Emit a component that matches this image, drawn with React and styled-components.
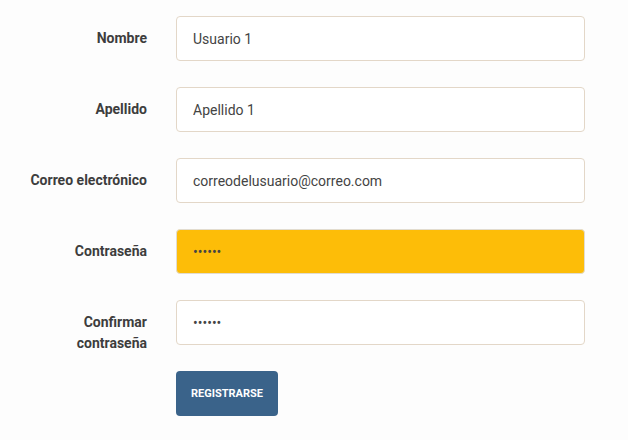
import React from 'react';
import styled, { createGlobalStyle } from 'styled-components';

const GlobalStyle = createGlobalStyle`
  body {
    margin: 0;
    background-color: #fdfdfd;
    font-family: Roboto, 'Liberation Sans', sans-serif;
  }
`;

const fields = [
  { id: 'nombre', label: 'Nombre', type: 'text', value: 'Usuario 1' },
  { id: 'apellido', label: 'Apellido', type: 'text', value: 'Apellido 1' },
  { id: 'correo', label: 'Correo electrónico', type: 'email', value: 'correodelusuario@correo.com' },
  { id: 'pass', label: 'Contraseña', type: 'password', value: 'secret', autofill: true },
  { id: 'pass2', label: 'Confirmar contraseña', type: 'password', value: 'secret' },
];

function App() {
  return (
    <>
      <GlobalStyle />
      <StForm onSubmit={(e) => e.preventDefault()}>
        {fields.map((item) => (
          <StRow key={item.id}>
            <StLabel htmlFor={item.id}>{item.label}</StLabel>
            <StInput
              id={item.id}
              type={item.type}
              defaultValue={item.value}
              $autofill={item.autofill}
            />
          </StRow>
        ))}
        <StRow>
          <span />
          <StButton type="submit">Registrarse</StButton>
        </StRow>
      </StForm>
    </>
  );
}

export default App;

const StForm = styled.form`
  display: flex;
  flex-direction: column;
  gap: 26px;
  padding: 16px 0 0 27px;
`;

const StRow = styled.div`
  display: grid;
  grid-template-columns: 120px 409px;
  grid-template-rows: 45px;
  column-gap: 29px;
  align-items: start;
`;

const StLabel = styled.label`
  text-align: right;
  font-size: 14px;
  font-weight: 700;
  line-height: 21px;
  color: #3d3d3d;
  padding-top: 12px;
`;

const StInput = styled.input`
  box-sizing: border-box;
  height: 45px;
  width: 100%;
  padding: 0 16px;
  border: 1px solid ${({ $autofill }) => ($autofill ? '#e2dccf' : '#e3d7c8')};
  border-radius: 4px;
  background-color: ${({ $autofill }) => ($autofill ? '#fdbd08' : '#ffffff')};
  font-family: Roboto, 'Liberation Sans', sans-serif;
  font-size: 14px;
  color: #444444;
  outline: none;
`;

const StButton = styled.button`
  width: 102px;
  height: 45px;
  border: none;
  border-radius: 4px;
  background-color: #3a638a;
  color: #ffffff;
  font-family: Roboto, 'Liberation Sans', sans-serif;
  font-size: 11px;
  font-weight: 700;
  text-transform: uppercase;
  cursor: pointer;
`;
